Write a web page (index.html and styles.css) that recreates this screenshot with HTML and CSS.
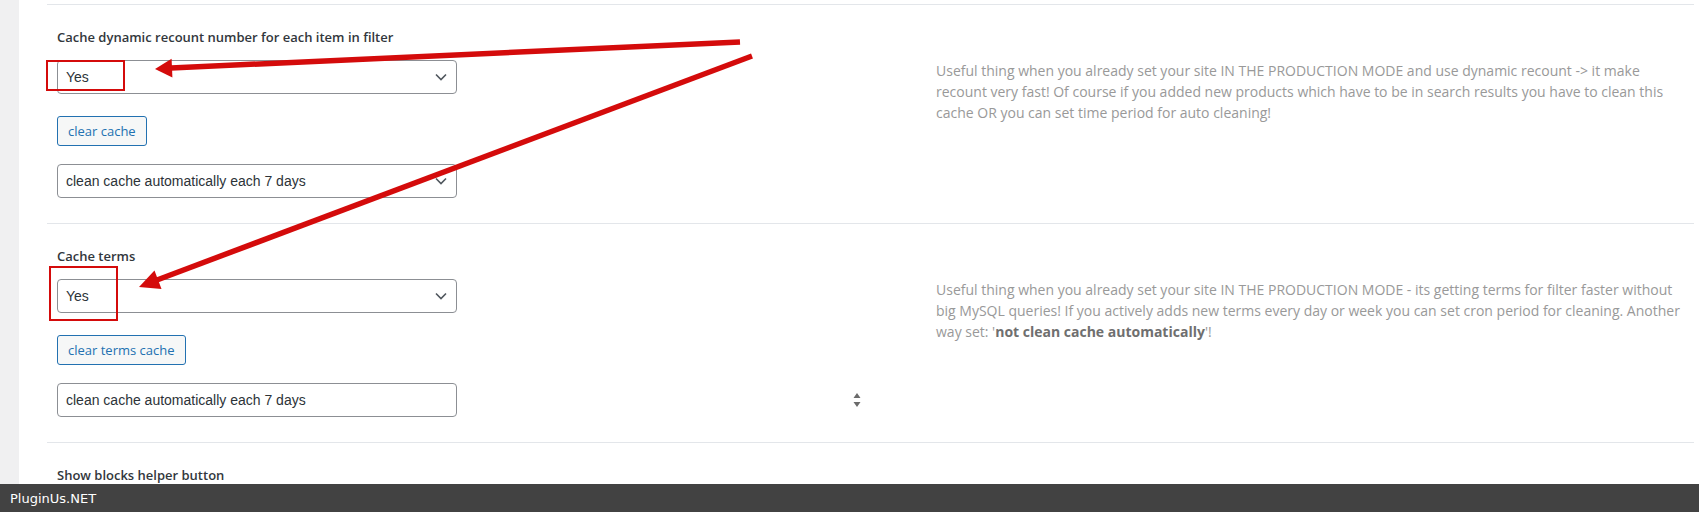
FILE: index.html
```html
<!DOCTYPE html>
<html lang="en">
  <head>
    <meta charset="UTF-8" />
    <meta name="viewport" content="width=device-width, initial-scale=1.0" />
    <title>Cache options</title>
    <link rel="stylesheet" href="styles.css">
  </head>
  <body>
    <div class="page">
      <div class="sidebar"></div>
      <div class="content">
        <div class="option">
          <div class="controls">
            <div class="label">Cache dynamic recount number for each item in filter</div>
            <div class="select">
              <span>Yes</span>
              <svg class="chevron" width="12" height="8" viewBox="0 0 12 8"><path d="M1 1.5l5 5 5-5" fill="none" stroke="#50575e" stroke-width="1.6"/></svg>
            </div>
            <div class="button">clear cache</div>
            <div class="select">
              <span>clean cache automatically each 7 days</span>
              <svg class="chevron" width="12" height="8" viewBox="0 0 12 8"><path d="M1 1.5l5 5 5-5" fill="none" stroke="#50575e" stroke-width="1.6"/></svg>
            </div>
          </div>
          <div class="description">
            Useful thing when you already set your site IN THE PRODUCTION MODE and use dynamic recount -&gt; it make recount very fast! Of course if you added new products which have to be in search results you have to clean this cache OR you can set time period for auto cleaning!
          </div>
        </div>

        <div class="option">
          <div class="controls">
            <div class="label">Cache terms</div>
            <div class="select">
              <span>Yes</span>
              <svg class="chevron" width="12" height="8" viewBox="0 0 12 8"><path d="M1 1.5l5 5 5-5" fill="none" stroke="#50575e" stroke-width="1.6"/></svg>
            </div>
            <div class="button">clear terms cache</div>
            <div class="field-row">
              <div class="select">
                <span>clean cache automatically each 7 days</span>
              </div>
              <svg class="spinner" width="8" height="16" viewBox="0 0 8 16"><path d="M4 1l3.5 5h-7z M4 15l3.5-5h-7z" fill="#6b6b6b"/></svg>
            </div>
          </div>
          <div class="description">
            Useful thing when you already set your site IN THE PRODUCTION MODE - its getting terms for filter faster without big MySQL queries! If you actively adds new terms every day or week you can set cron period for cleaning. Another way set: '<b>not clean cache automatically</b>'!
          </div>
        </div>

        <div class="option">
          <div class="controls">
            <div class="label">Show blocks helper button</div>
          </div>
        </div>
      </div>
    </div>

    <!-- annotations drawn over the screenshot -->
    <svg class="marks" width="1699" height="512" viewBox="0 0 1699 512">
      <rect x="47" y="61" width="77" height="29" fill="none" stroke="#d40b0b" stroke-width="2"/>
      <rect x="50" y="267" width="67" height="53" fill="none" stroke="#d40b0b" stroke-width="2"/>
      <line x1="740" y1="42" x2="171" y2="68" stroke="#d40b0b" stroke-width="5.5"/>
      <polygon points="155,69 172.4,77.5 171.6,58.8" fill="#d40b0b"/>
      <line x1="752" y1="56" x2="157" y2="280" stroke="#d40b0b" stroke-width="5.5"/>
      <polygon points="139,287 161.5,289 154.5,270.5" fill="#d40b0b"/>
    </svg>

    <div class="footer">PluginUs.NET</div>
  </body>
</html>
```

FILE: styles.css
```css
* {
  margin: 0;
  padding: 0;
  box-sizing: border-box;
}

body {
  width: 1699px;
  height: 512px;
  overflow: hidden;
  background-color: #fff;
  font-family: 'Open Sans', 'Noto Sans', sans-serif;
  color: #2c3338;
}

.page {
  display: flex;
  height: 100%;
}

.sidebar {
  width: 19px;
  flex-shrink: 0;
  background-color: #f0f0f1;
}

.content {
  flex: 1;
  padding: 4px 5px 0 28px;
}

.option {
  display: grid;
  grid-template-columns: 879px 1fr;
  border-top: 1px solid #e3e6ea;
  padding: 22px 6px 25px 10px;
}

.controls {
  display: flex;
  flex-direction: column;
  align-items: flex-start;
}

.label {
  font-size: 13px;
  font-weight: 600;
  line-height: 20px;
  color: #32373c;
  margin-bottom: 13px;
}

.select {
  width: 400px;
  height: 34px;
  display: flex;
  align-items: center;
  justify-content: space-between;
  padding: 0 9px 0 8px;
  border: 1px solid #8c8f94;
  border-radius: 4px;
  font-family: 'Liberation Sans', Arial, sans-serif;
  font-size: 14px;
  color: #2c3338;
}

.button {
  margin: 22px 0 18px;
  height: 30px;
  display: flex;
  align-items: center;
  padding: 0 10px;
  border: 1px solid #2271b1;
  border-radius: 3px;
  background-color: #f6f7f7;
  color: #2271b1;
  font-size: 13px;
}

.field-row {
  display: flex;
  align-items: center;
}

.spinner {
  margin-left: 396px;
}

.description {
  padding-top: 33px;
  font-size: 14px;
  line-height: 21px;
  color: #999;
}

.description b {
  color: #6f6f6f;
}

.marks {
  position: absolute;
  top: 0;
  left: 0;
  pointer-events: none;
}

.footer {
  position: fixed;
  left: 0;
  right: 0;
  bottom: 0;
  height: 28px;
  padding-left: 10px;
  display: flex;
  align-items: center;
  background-color: #424242;
  color: #fff;
  font-family: 'DejaVu Sans', sans-serif;
  font-size: 13px;
}
```
